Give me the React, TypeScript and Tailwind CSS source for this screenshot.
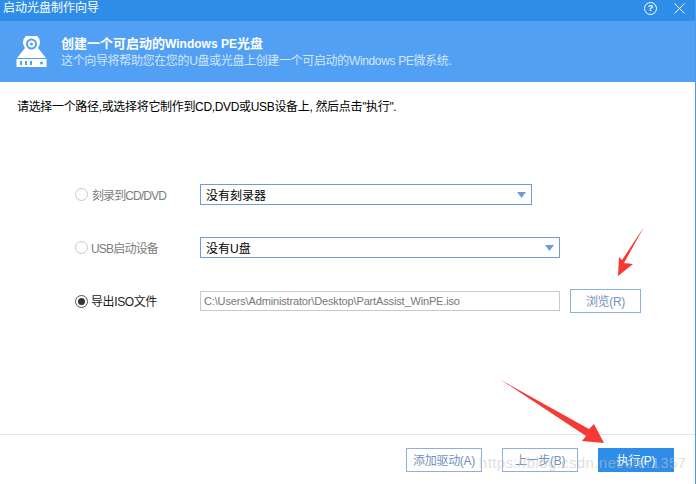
const font = "font-['Liberation_Sans','Noto_Sans_CJK_SC',sans-serif]";

function Radio({ checked }: { checked?: boolean }) {
  return (
    <span
      className={`flex h-[13px] w-[13px] shrink-0 items-center justify-center rounded-full border ${
        checked ? "border-[#555555]" : "border-[#c8c8c8]"
      }`}
    >
      {checked && <span className="h-[7px] w-[7px] rounded-full bg-[#333333]" />}
    </span>
  );
}

function Select({ value, width }: { value: string; width: string }) {
  return (
    <div
      className={`flex h-[21px] items-center justify-between border border-[#6f9bd8] pl-[5px] pr-[5px] text-[12px] text-black ${width}`}
    >
      <span className="pt-[2px]">{value}</span>
      <svg width="9" height="6" viewBox="0 0 9 6">
        <path d="M0 0h9L4.500 6z" fill="#6f9bd8" />
      </svg>
    </div>
  );
}

function OutlineButton({ label, width }: { label: string; width: string }) {
  return (
    <button
      className={`flex h-[24px] items-center justify-center border border-[#8fb0dc] pt-[1px] text-[12px] tracking-[-0.3px] text-[#7391b8] ${width}`}
    >
      {label}
    </button>
  );
}

export default function App() {
  return (
    <div className={`relative flex h-[484px] w-[696px] flex-col overflow-hidden border-r border-[#4c9aea] bg-white ${font}`}>
      {/* title bar */}
      <div className="flex h-[21px] items-center justify-between bg-[#2e8de8] pl-[3px] pr-[10px] text-white">
        <span className="-mt-[6px] text-[12px] leading-[14px]">启动光盘制作向导</span>
        <div className="-mt-[5px] flex items-center gap-[17px]">
          <span className="flex h-[13px] w-[13px] items-center justify-center rounded-full border border-white text-[9px] font-bold leading-none">
            ?
          </span>
          <svg width="11" height="11" viewBox="0 0 11 11">
            <path d="M0.500 0.500l10 10M10.500 0.500l-10 10" stroke="#fff" strokeWidth="1" fill="none" />
          </svg>
        </div>
      </div>

      {/* banner */}
      <div className="flex h-[61px] items-center bg-[#52a0f3] pl-[16px]">
        <svg width="31" height="31" viewBox="0 0 31 31">
          <path d="M1 22 9 12a8.500 8.500 0 1 1 13 0l8 10z" fill="#fff" />
          <circle cx="15.500" cy="8" r="5.500" fill="#52a0f3" />
          <circle cx="15.500" cy="8" r="3.500" fill="#fff" />
          <circle cx="15.500" cy="8" r="1.500" fill="#52a0f3" />
          <rect x="0.500" y="23" width="30" height="8" fill="#fff" />
          <path d="M4 25h2v4H4zM9 25h2v4H9zM14 25h2v4h-2z" fill="#52a0f3" />
          <circle cx="25.500" cy="27" r="1.500" fill="#52a0f3" />
        </svg>
        <div className="ml-[14px] flex flex-col">
          <span className="text-[13px] font-bold leading-[17px] text-white">
            创建一个可启动的<span className="text-[12px]">Windows PE</span>光盘
          </span>
          <span className="text-[12px] leading-[16px] tracking-[-0.35px] text-[#d3e6fb]">
            这个向导将帮助您在您的U盘或光盘上创建一个可启动的Windows PE微系统.
          </span>
        </div>
      </div>

      {/* body */}
      <div className="flex flex-1 flex-col pl-[17px]">
        <p className="mt-[17px] text-[12px] leading-[16px] tracking-[-0.33px] text-black">
          请选择一个路径,或选择将它制作到CD,DVD或USB设备上, 然后点击"执行".
        </p>

        <div className="mt-[69px] flex flex-col pl-[58px]">
          <div className="flex h-[21px] items-center">
            <Radio />
            <span className="ml-[4px] w-[108px] pt-[2px] text-[12px] tracking-[-0.9px] text-[#7d7d7d]">刻录到CD/DVD</span>
            <Select value="没有刻录器" width="w-[332px]" />
          </div>
          <div className="mt-[32px] flex h-[21px] items-center">
            <Radio />
            <span className="ml-[3px] w-[109px] pt-[2px] text-[12px] tracking-[-0.8px] text-[#7d7d7d]">USB启动设备</span>
            <Select value="没有U盘" width="w-[360px]" />
          </div>
          <div className="mt-[31px] flex h-[24px] items-center">
            <Radio checked />
            <span className="ml-[3px] w-[109px] pt-[2px] text-[12px] tracking-[-0.4px] text-[#222222]">导出ISO文件</span>
            <div className="flex h-[20px] w-[360px] items-center border border-[#c9c9c9] pl-[3px] text-[11px] tracking-[-0.15px] text-[#777777]">
              C:\Users\Administrator\Desktop\PartAssist_WinPE.iso
            </div>
            <div className="ml-[10px]">
              <OutlineButton label="浏览(R)" width="w-[71px]" />
            </div>
          </div>
        </div>
      </div>

      {/* footer */}
      <div className="flex h-[50px] items-start justify-end border-t border-[#e2e6ea] pr-[21px] pt-[13px]">
        <OutlineButton label="添加驱动(A)" width="w-[76px]" />
        <div className="ml-[20px]">
          <OutlineButton label="上一步(B)" width="w-[76px]" />
        </div>
        <button className="ml-[20px] flex h-[24px] w-[76px] items-center justify-center bg-[#2e8de8] pt-[1px] text-[12px] tracking-[-0.3px] text-white">
          执行(P)
        </button>
      </div>

      {/* pasted-on annotations */}
      <svg className="absolute left-0 top-0" width="696" height="484" viewBox="0 0 696 484">
        <path d="M644 227 624 263 633 264 618 276 619 257 622 260z" fill="#f53a36" />
        <path d="M501 380 589 429 594 424 604 443 582 441 586 436z" fill="#f53a36" />
      </svg>
      <span className="absolute left-[479px] top-[454px] whitespace-nowrap text-[15px] leading-[18px] tracking-[0.35px] text-[#c4c4c4]/55">
        https://blog.csdn.net/ster1357
      </span>
    </div>
  );
}
